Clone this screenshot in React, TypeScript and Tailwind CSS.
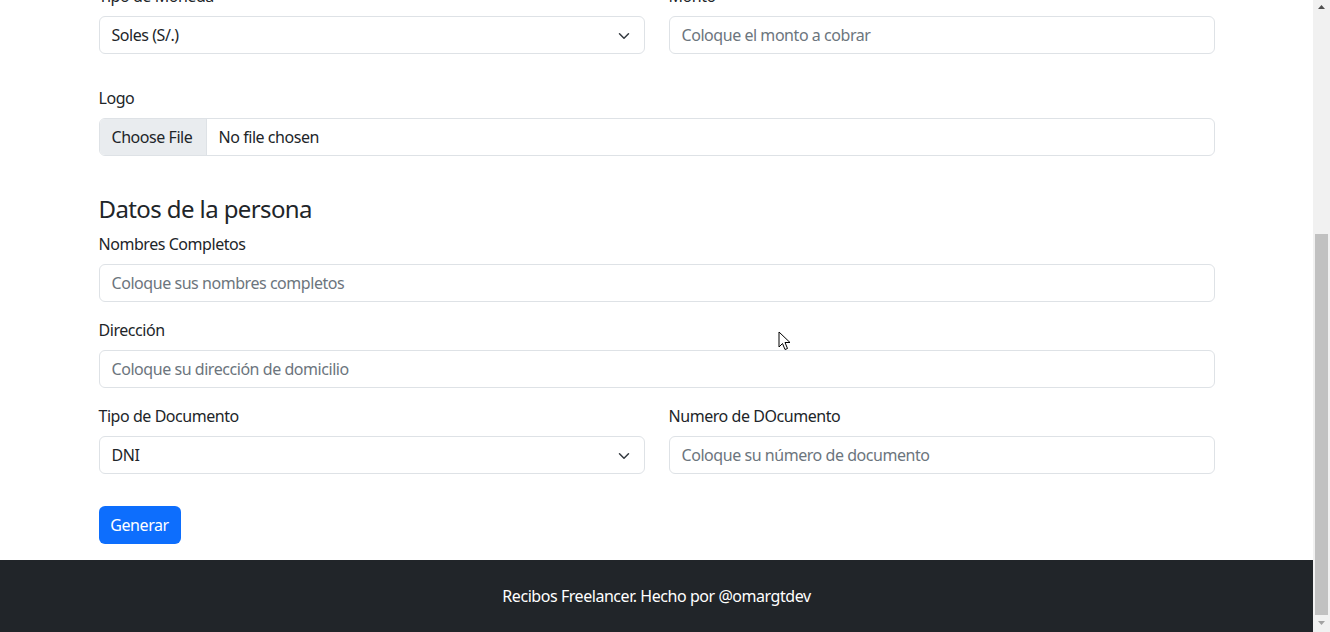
import React from "react";

const font = { fontFamily: '"Segoe UI", "Noto Sans", "Liberation Sans", sans-serif' };

function Chevron() {
  return (
    <svg width="16" height="12" viewBox="0 0 16 16" className="absolute right-[12px] top-[13px]">
      <path d="m2 5 6 6 6-6" fill="none" stroke="#343a40" strokeWidth="2" strokeLinecap="round" strokeLinejoin="round" />
    </svg>
  );
}

function Select({ value }: { value: string }) {
  return (
    <div className="relative h-[38px] w-full rounded-[6px] border border-[#dee2e6] bg-white px-[12px] flex items-center text-[16px] text-[#212529]">
      <span>{value}</span>
      <Chevron />
    </div>
  );
}

function Input({ placeholder }: { placeholder: string }) {
  return (
    <input
      readOnly
      placeholder={placeholder}
      className="h-[38px] w-full rounded-[6px] border border-[#dee2e6] bg-white px-[12px] text-[16px] tracking-[-0.45px] text-[#212529] placeholder:text-[#6c757d] outline-none"
      style={font}
    />
  );
}

function Label({ children }: { children: React.ReactNode }) {
  return <div className="mb-[8px] h-[24px] leading-[24px] text-[16px] text-[#212529]">{children}</div>;
}

export default function App() {
  return (
    <div className="flex h-[632px] w-[1330px] overflow-hidden bg-white tracking-[-0.45px]" style={font}>
      <div className="relative flex h-[632px] w-[1313px] flex-col overflow-hidden">
        <div className="mx-auto mt-[-16px] w-[1116px]">
          <div className="grid grid-cols-2 gap-x-[24px]">
            <div>
              <Label>Tipo de Moneda</Label>
              <Select value="Soles (S/.)" />
            </div>
            <div>
              <Label>Monto</Label>
              <Input placeholder="Coloque el monto a cobrar" />
            </div>
          </div>
          <div className="mt-[32px]">
            <Label>Logo</Label>
            <div className="flex h-[38px] w-full overflow-hidden rounded-[6px] border border-[#dee2e6] text-[16px] text-[#212529]">
              <div className="flex w-[107px] items-center border-r border-[#dee2e6] bg-[#e9ecef] pl-[12px]">Choose File</div>
              <div className="flex items-center pl-[12px]">No file chosen</div>
            </div>
          </div>
          <h4 className="mt-[38px] mb-[9px] h-[29px] text-[24px] leading-[29px] font-normal tracking-[-0.6px] text-[#212529]">Datos de la persona</h4>
          <div>
            <Label>Nombres Completos</Label>
            <Input placeholder="Coloque sus nombres completos" />
          </div>
          <div className="mt-[16px]">
            <Label>Dirección</Label>
            <Input placeholder="Coloque su dirección de domicilio" />
          </div>
          <div className="mt-[16px] grid grid-cols-2 gap-x-[24px]">
            <div>
              <Label>Tipo de Documento</Label>
              <Select value="DNI" />
            </div>
            <div>
              <Label>Numero de DOcumento</Label>
              <Input placeholder="Coloque su número de documento" />
            </div>
          </div>
          <button className="mt-[32px] h-[38px] w-[82px] rounded-[6px] bg-[#0d6efd] text-[16px] tracking-[-0.45px] text-white" style={font}>
            Generar
          </button>
        </div>
        <footer className="mt-[16px] flex h-[72px] shrink-0 items-center justify-center bg-[#212529] text-[16px] text-white">
          Recibos Freelancer. Hecho por @omargtdev
        </footer>
        <svg className="absolute left-[778px] top-[331px]" width="14" height="20" viewBox="0 0 14 20">
          <path d="M1 1 L1 16 L4.5 12.5 L7 18.5 L9.5 17.5 L7 11.5 L12 11.5 Z" fill="white" stroke="black" strokeWidth="1" strokeLinejoin="round" />
        </svg>
      </div>
      <div className="relative h-[632px] w-[17px] bg-[#f1f1f1]">
        <svg className="absolute left-[4px] top-[4px]" width="9" height="6" viewBox="0 0 9 6">
          <path d="M4.5 1 L8 5 L1 5 Z" fill="#505050" />
        </svg>
        <div className="absolute left-[2px] top-[234px] h-[381px] w-[13px] bg-[#c1c1c1]" />
        <svg className="absolute left-[4px] top-[620px]" width="9" height="6" viewBox="0 0 9 6">
          <path d="M1 1 L8 1 L4.5 5 Z" fill="#a3a3a3" />
        </svg>
      </div>
    </div>
  );
}
